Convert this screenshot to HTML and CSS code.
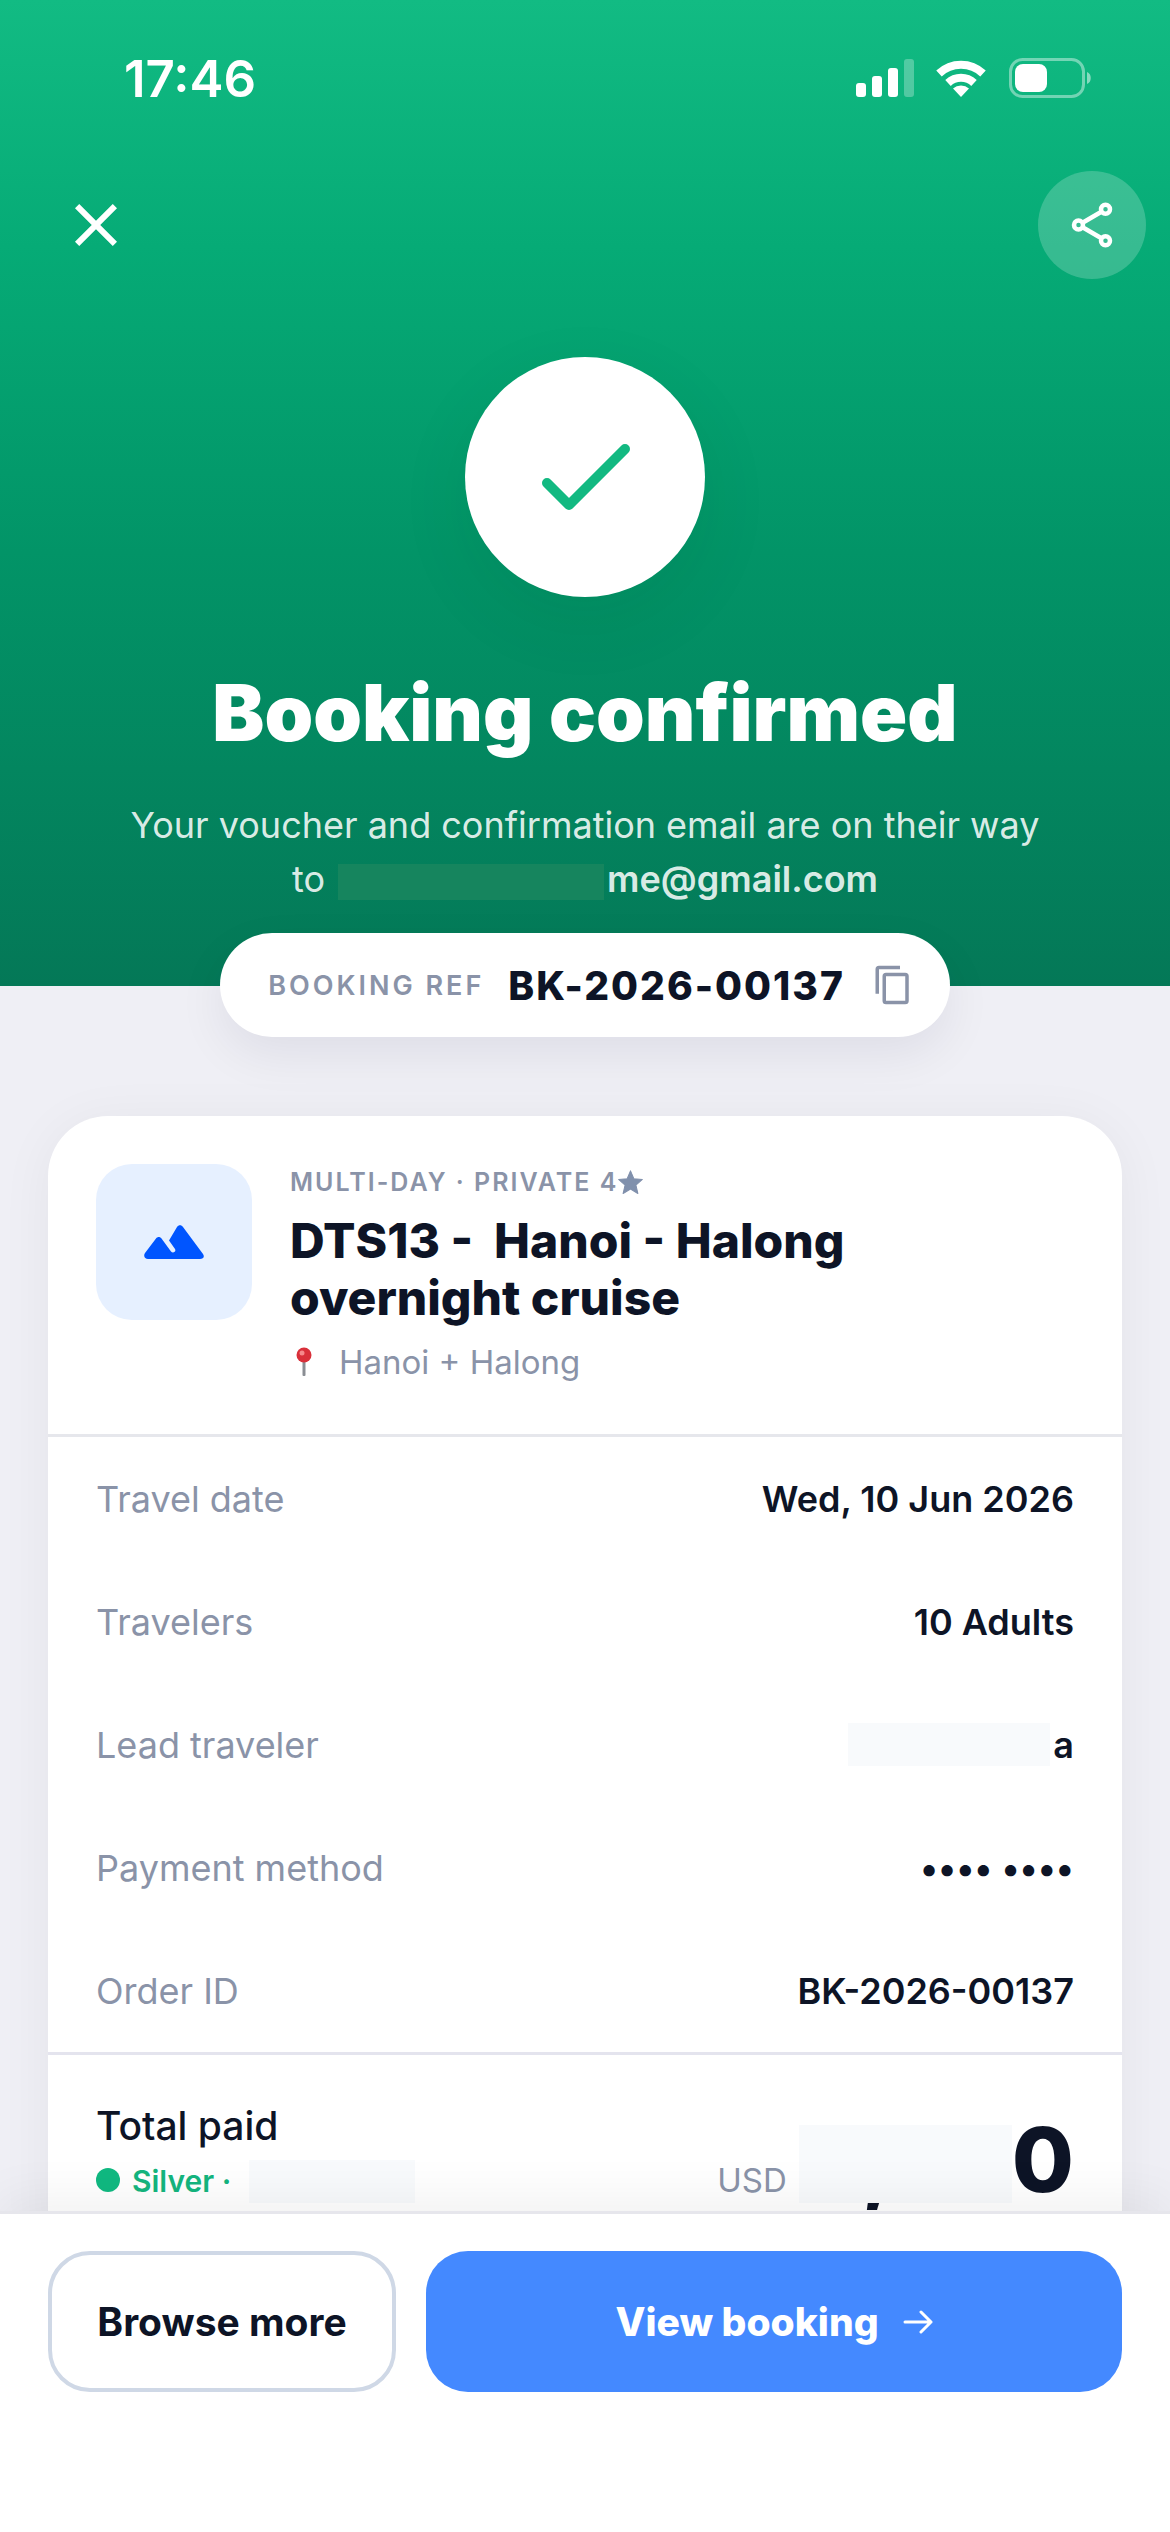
FILE: index.html
```html
<!DOCTYPE html>
<html lang="en">
<head>
<meta charset="utf-8">
<meta name="viewport" content="width=device-width, initial-scale=1">
<title>Booking confirmed</title>
<link rel="stylesheet" href="styles.css">
</head>
<body>
<main class="scroll">
  <header class="hero">
    <div class="status">
      <span class="clock">17:46</span>
      <svg class="status-icons" width="236" height="40" viewBox="0 0 236 40" fill="#fff" aria-hidden="true">
        <rect x="0" y="25" width="10" height="14" rx="3"/>
        <rect x="16" y="18" width="10" height="21" rx="3"/>
        <rect x="32" y="10" width="10" height="29" rx="3"/>
        <rect x="48" y="1" width="10" height="38" rx="3" opacity=".28"/>
        <g fill="none" stroke="#fff" stroke-width="8">
          <path d="M83 15.500a32 32 0 0 1 44 0"/>
          <path d="M92 25a19 19 0 0 1 26 0"/>
        </g>
        <path d="M97 30.500a12 12 0 0 1 16 0L105 39z"/>
        <rect x="154.500" y="1.500" width="73" height="37" rx="12" fill="none" stroke="#fff" stroke-width="3" opacity=".42"/>
        <path d="M231 14c5 1.500 5 10.500 0 12z" opacity=".5"/>
        <rect x="159" y="6" width="32" height="28" rx="8"/>
      </svg>
    </div>
    <nav class="toolbar">
      <button class="icon-btn" type="button" aria-label="Close">
        <svg width="72" height="72" viewBox="0 0 24 24" fill="#fff"><path d="M19 6.410 17.590 5 12 10.590 6.410 5 5 6.410 10.590 12 5 17.590 6.410 19 12 13.410 17.590 19 19 17.590 13.410 12z"/></svg>
      </button>
      <button class="icon-btn icon-btn-tint" type="button" aria-label="Share">
        <svg width="54" height="54" viewBox="0 0 24 24" fill="none" stroke="#fff" stroke-width="2"><circle cx="18" cy="5" r="2"/><circle cx="6" cy="12" r="2"/><circle cx="18" cy="19" r="2"/><path d="M8 10.900 16 6.200M8 13.100l8 4.700"/></svg>
      </button>
    </nav>
    <div class="badge">
      <svg width="90" height="68" viewBox="0 0 90 68" fill="none" stroke="#12b981" stroke-width="10" stroke-linecap="round" stroke-linejoin="round" aria-hidden="true"><path d="M7 40l22 22 56-56"/></svg>
    </div>
    <h1 class="title">Booking confirmed</h1>
    <p class="lead">Your voucher and confirmation email are on their way to <span class="masked-email"><span class="mask mask-email"></span><strong>me@gmail.com</strong></span></p>
  </header>

  <div class="ref">
    <span class="ref-label">BOOKING REF</span>
    <span class="ref-code">BK-2026-00137</span>
    <button class="copy" type="button" aria-label="Copy booking reference">
      <svg width="42" height="42" viewBox="0 0 24 24" fill="#8a93a8"><path d="M19 21H8V7h11m0-2H8a2 2 0 0 0-2 2v14a2 2 0 0 0 2 2h11a2 2 0 0 0 2-2V7a2 2 0 0 0-2-2m-3-4H4a2 2 0 0 0-2 2v14h2V3h12z"/></svg>
    </button>
  </div>

  <section class="card">
    <div class="trip">
      <div class="thumb">
        <svg width="60" height="36" viewBox="0 0 60 36" aria-hidden="true"><path d="M4 35C1 35-1 32 1 29L12 14.500c1.500-2 4-2 5.500 0L27 27.500c2 2.500 5.500 0 4-2.500l-6-8.500L33 3c1.500-2.500 4.500-2.500 6 0l20 27c2 3 0 5-3 5z" fill="#0055ff"/></svg>
      </div>
      <div class="trip-text">
        <p class="kicker">MULTI-DAY · PRIVATE 4<svg width="25" height="25" viewBox="0 0 24 24" fill="#8090ac" role="img" aria-label="star"><path d="M12 .8l3.200 7.600 8.200.7-6.200 5.400 1.900 8.100L12 18.300 4.900 22.600l1.900-8.100L.6 9.100l8.200-.7z" stroke="#8090ac" stroke-linejoin="round"/></svg></p>
        <h2 class="trip-name">DTS13 - &nbsp;Hanoi - Halong overnight cruise</h2>
        <p class="place">
          <svg width="22" height="30" viewBox="0 0 22 30" aria-hidden="true"><rect x="9.500" y="12" width="3" height="17" rx="1" fill="#8a8e94"/><circle cx="11" cy="8" r="7.500" fill="#d9303a"/><circle cx="9" cy="6" r="2.500" fill="#f58a8c"/></svg>
          Hanoi + Halong
        </p>
      </div>
    </div>
    <dl class="details">
      <div class="row"><dt>Travel date</dt><dd>Wed, 10 Jun 2026</dd></div>
      <div class="row"><dt>Travelers</dt><dd>10 Adults</dd></div>
      <div class="row"><dt>Lead traveler</dt><dd><span class="mask mask-name"></span>a</dd></div>
      <div class="row"><dt>Payment method</dt><dd>•••• ••••</dd></div>
      <div class="row"><dt>Order ID</dt><dd>BK-2026-00137</dd></div>
    </dl>
    <div class="total">
      <div>
        <p class="total-label">Total paid</p>
        <p class="tier"><span class="dot"></span>Silver · <span class="mask mask-tier"></span></p>
      </div>
      <p class="amount"><span class="currency">USD</span><span class="mask-amount">,</span>0</p>
    </div>
  </section>
</main>

<footer class="actions">
  <button class="btn btn-outline" type="button">Browse more</button>
  <button class="btn btn-primary" type="button">View booking
    <svg width="30" height="26" viewBox="0 0 30 26" fill="none" stroke="#fff" stroke-width="3" stroke-linecap="round" stroke-linejoin="round" aria-hidden="true"><path d="M2 13h26M18 3l10 10-10 10"/></svg>
  </button>
</footer>
</body>
</html>
```
FILE: styles.css
```css
* {
  box-sizing: border-box;
  margin: 0;
}

body {
  display: flex;
  flex-direction: column;
  height: 100vh;
  background: #efeff5;
  color: #0d1426;
  font-family: Inter, "Liberation Sans", sans-serif;
  font-size: 36px;
}

button {
  border: 0;
  padding: 0;
  background: none;
  font: inherit;
  color: inherit;
}

svg {
  display: block;
  flex: none;
}

.scroll {
  flex: 1;
  min-height: 0;
  overflow: hidden auto;
  scrollbar-width: none;
}

/* Hero */
.hero {
  padding-bottom: 68px;
  background: linear-gradient(#12bb83, #06ab76 25%, #029467 56%, #047857);
  color: #fff;
  text-align: center;
}

.status {
  display: flex;
  justify-content: space-between;
  align-items: center;
  height: 156px;
  padding: 0 78px 0 124px;
}

.clock {
  font-size: 51px;
  font-weight: 600;
}

.toolbar {
  display: flex;
  justify-content: space-between;
  padding: 15px 24px 0 42px;
}

.icon-btn {
  display: grid;
  place-items: center;
  width: 108px;
  height: 108px;
  border-radius: 50%;
}

.icon-btn-tint {
  background: rgba(255, 255, 255, 0.2);
}

.badge {
  display: grid;
  place-items: center;
  width: 240px;
  height: 240px;
  margin: 78px auto 0;
  border-radius: 50%;
  background: #fff;
  box-shadow: 0 24px 72px rgba(0, 60, 30, 0.08);
}

.title {
  margin-top: 69px;
  font-size: 78px;
  line-height: 93px;
  font-weight: 900;
}

.lead {
  max-width: 940px;
  margin: 39px auto 0;
  padding-bottom: 12px;
  line-height: 54px;
  color: rgba(255, 255, 255, 0.87);
}

.lead strong {
  font-weight: 600;
}

.masked-email {
  white-space: nowrap;
}

.mask {
  display: inline-block;
  vertical-align: middle;
  background: #f8fafc;
}

.mask-email {
  width: 266px;
  height: 36px;
  margin: 0 3px;
  background: #16855e;
}

/* Booking reference pill */
.ref {
  position: relative;
  display: flex;
  align-items: center;
  width: fit-content;
  height: 104px;
  margin: -53px auto 0;
  padding: 0 36px 0 48px;
  border-radius: 52px;
  background: #fff;
  box-shadow: 0 18px 48px rgba(20, 20, 50, 0.07);
}

.ref-label {
  font-size: 27px;
  font-weight: 600;
  letter-spacing: 3px;
  color: #8a93a8;
}

.ref-code {
  margin: 0 27px 0 24px;
  font-size: 39px;
  font-weight: 800;
  letter-spacing: 2px;
}

/* Trip card */
.card {
  margin: 79px 48px 60px;
  border-radius: 60px;
  background: #fff;
  box-shadow: 0 6px 54px rgba(20, 20, 40, 0.05);
}

.trip {
  display: flex;
  gap: 38px;
  padding: 48px;
  border-bottom: 3px solid #e6e7ec;
}

.thumb {
  display: grid;
  place-items: center;
  flex: none;
  width: 156px;
  height: 156px;
  border-radius: 36px;
  background: #e6f0ff;
}

.kicker {
  display: flex;
  align-items: center;
  line-height: 36px;
  font-size: 25px;
  font-weight: 600;
  letter-spacing: 2px;
  color: #8a93a8;
}

.trip-name {
  max-width: 720px;
  margin-top: 12px;
  font-size: 48px;
  line-height: 57px;
  font-weight: 800;
}

.place {
  display: flex;
  align-items: center;
  gap: 24px;
  margin-top: 12px;
  padding-left: 3px;
  font-size: 33px;
  line-height: 48px;
  color: #8a93a8;
}

.row {
  display: flex;
  justify-content: space-between;
  align-items: center;
  height: 123px;
  padding: 0 48px;
  line-height: 54px;
}

.row dt {
  color: #8a93a8;
}

.row dd {
  display: flex;
  align-items: center;
  font-weight: 600;
}

.mask-name {
  width: 202px;
  height: 43px;
  margin-right: 3px;
}

.total {
  display: flex;
  justify-content: space-between;
  align-items: last baseline;
  padding: 42px 48px 48px;
  border-top: 3px solid #e4e4ee;
}

.total-label {
  font-size: 39px;
  line-height: 57px;
  font-weight: 500;
}

.tier {
  display: flex;
  align-items: last baseline;
  gap: 12px;
  font-size: 30px;
  line-height: 54px;
  font-weight: 600;
  color: #14b57e;
}

.dot {
  width: 24px;
  height: 24px;
  border-radius: 50%;
  background: #10b981;
}

.mask-tier {
  align-self: center;
  width: 166px;
  height: 43px;
  margin-left: 6px;
}

.amount {
  display: flex;
  align-items: baseline;
  font-size: 90px;
  line-height: 90px;
  font-weight: 800;
}

.currency {
  margin-right: 12px;
  font-size: 33px;
  font-weight: 400;
  color: #8a93a8;
}

.mask-amount {
  position: relative;
  width: 213px;
  padding-left: 63px;
}

.mask-amount::after {
  content: "";
  position: absolute;
  inset: 10px 0 2px;
  background: #f8fafc;
}

/* Bottom actions */
.actions {
  position: relative;
  display: grid;
  grid-template-columns: 1fr 2fr;
  gap: 30px;
  padding: 37px 48px 140px;
  border-top: 3px solid #e6e6ec;
  background: #fff;
  box-shadow: 0 -12px 48px rgba(0, 0, 0, 0.06);
}

.btn {
  display: flex;
  justify-content: center;
  align-items: center;
  gap: 24px;
  height: 141px;
  border-radius: 42px;
  font-size: 39px;
  font-weight: 700;
  white-space: nowrap;
}

.btn-outline {
  border: 4px solid #cfd8e6;
}

.btn-primary {
  background: #4489ff;
  color: #fff;
  font-weight: 800;
}
```
